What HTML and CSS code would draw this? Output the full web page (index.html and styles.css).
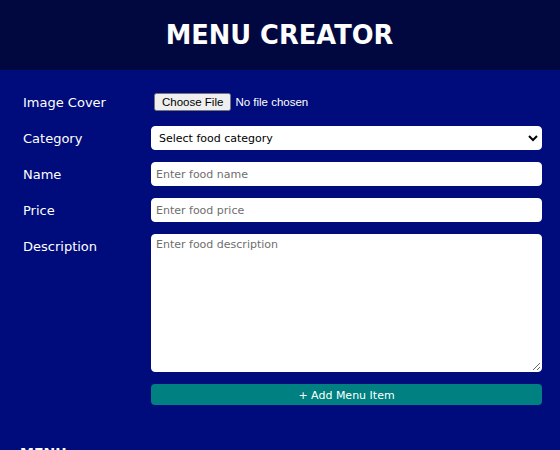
FILE: index.html
```html
<!DOCTYPE html>
<html lang="en">
<head>
<meta charset="utf-8">
<title>Menu Creator</title>
<link rel="stylesheet" href="styles.css">
</head>
<body>
<header class="top">
  <h1 class="title">MENU CREATOR</h1>
</header>
<main class="main">
  <form class="form">
    <label class="label" for="cover">Image Cover</label>
    <div class="field file-field"><input class="file" id="cover" type="file"></div>

    <label class="label" for="cat">Category</label>
    <div class="field">
      <select class="control select" id="cat">
        <option>Select food category</option>
      </select>
    </div>

    <label class="label" for="name">Name</label>
    <div class="field"><input class="control" id="name" type="text" placeholder="Enter food name"></div>

    <label class="label" for="price">Price</label>
    <div class="field"><input class="control" id="price" type="text" placeholder="Enter food price"></div>

    <label class="label" for="desc">Description</label>
    <div class="field area-field"><textarea class="control textarea" id="desc" placeholder="Enter food description"></textarea></div>

    <div class="spacer"></div>
    <div class="field"><button class="add" type="button">+ Add Menu Item</button></div>
  </form>
  <section class="menu">
    <h2 class="menu-title">MENU</h2>
  </section>
</main>
</body>
</html>
```
FILE: styles.css
```css
* { box-sizing: border-box; }
html, body {
  margin: 0;
  padding: 0;
}
body {
  background: #000c7b;
  font-family: "DejaVu Sans", Verdana, sans-serif;
  color: #fff;
  height: 450px;
  overflow: hidden;
}
.top {
  background: #00083f;
  height: 70px;
  display: flex;
  align-items: center;
  justify-content: center;
}
.title {
  margin: 0 0 0 -1px;
  font-size: 25.7px;
  font-weight: bold;
  color: #fff;
}
.main {
  padding: 20px 18px 0 23px;
}
.form {
  display: grid;
  grid-template-columns: 128px 1fr;
  row-gap: 12px;
  align-items: start;
}
.label {
  font-size: 13px;
  line-height: 24px;
  height: 24px;
  padding-top: 1px;
  color: #fff;
}
.field {
  display: flex;
  align-items: center;
  height: 24px;
}
.area-field {
  height: 138px;
}
.file-field {
  padding-left: 3px;
}
.file {
  font-family: "Liberation Sans", Arial, sans-serif;
  font-size: 11.5px;
  color: #fff;
}
.control {
  width: 100%;
  height: 24px;
  border: 1px solid #fff;
  border-radius: 4px;
  background: #fff;
  font-family: "DejaVu Sans", Verdana, sans-serif;
  font-size: 11px;
  color: #000;
  padding: 1px 4px 0;
  outline: none;
}
.control::placeholder {
  color: #6e6e6e;
}
.select {
  padding: 0 4px 0 3px;
}
.textarea {
  height: 138px;
  padding: 3px 4px;
  resize: vertical;
  display: block;
}
.add {
  width: 100%;
  height: 21px;
  border: none;
  border-radius: 4px;
  background: #008080;
  color: #fff;
  font-family: "DejaVu Sans", Verdana, sans-serif;
  font-size: 11px;
  padding: 1px 0 0;
  align-self: flex-start;
}
.menu {
  padding-top: 35px;
  margin-left: -3px;
}
.menu-title {
  margin: 0;
  font-size: 14px;
  font-weight: bold;
  line-height: 20px;
}
```
